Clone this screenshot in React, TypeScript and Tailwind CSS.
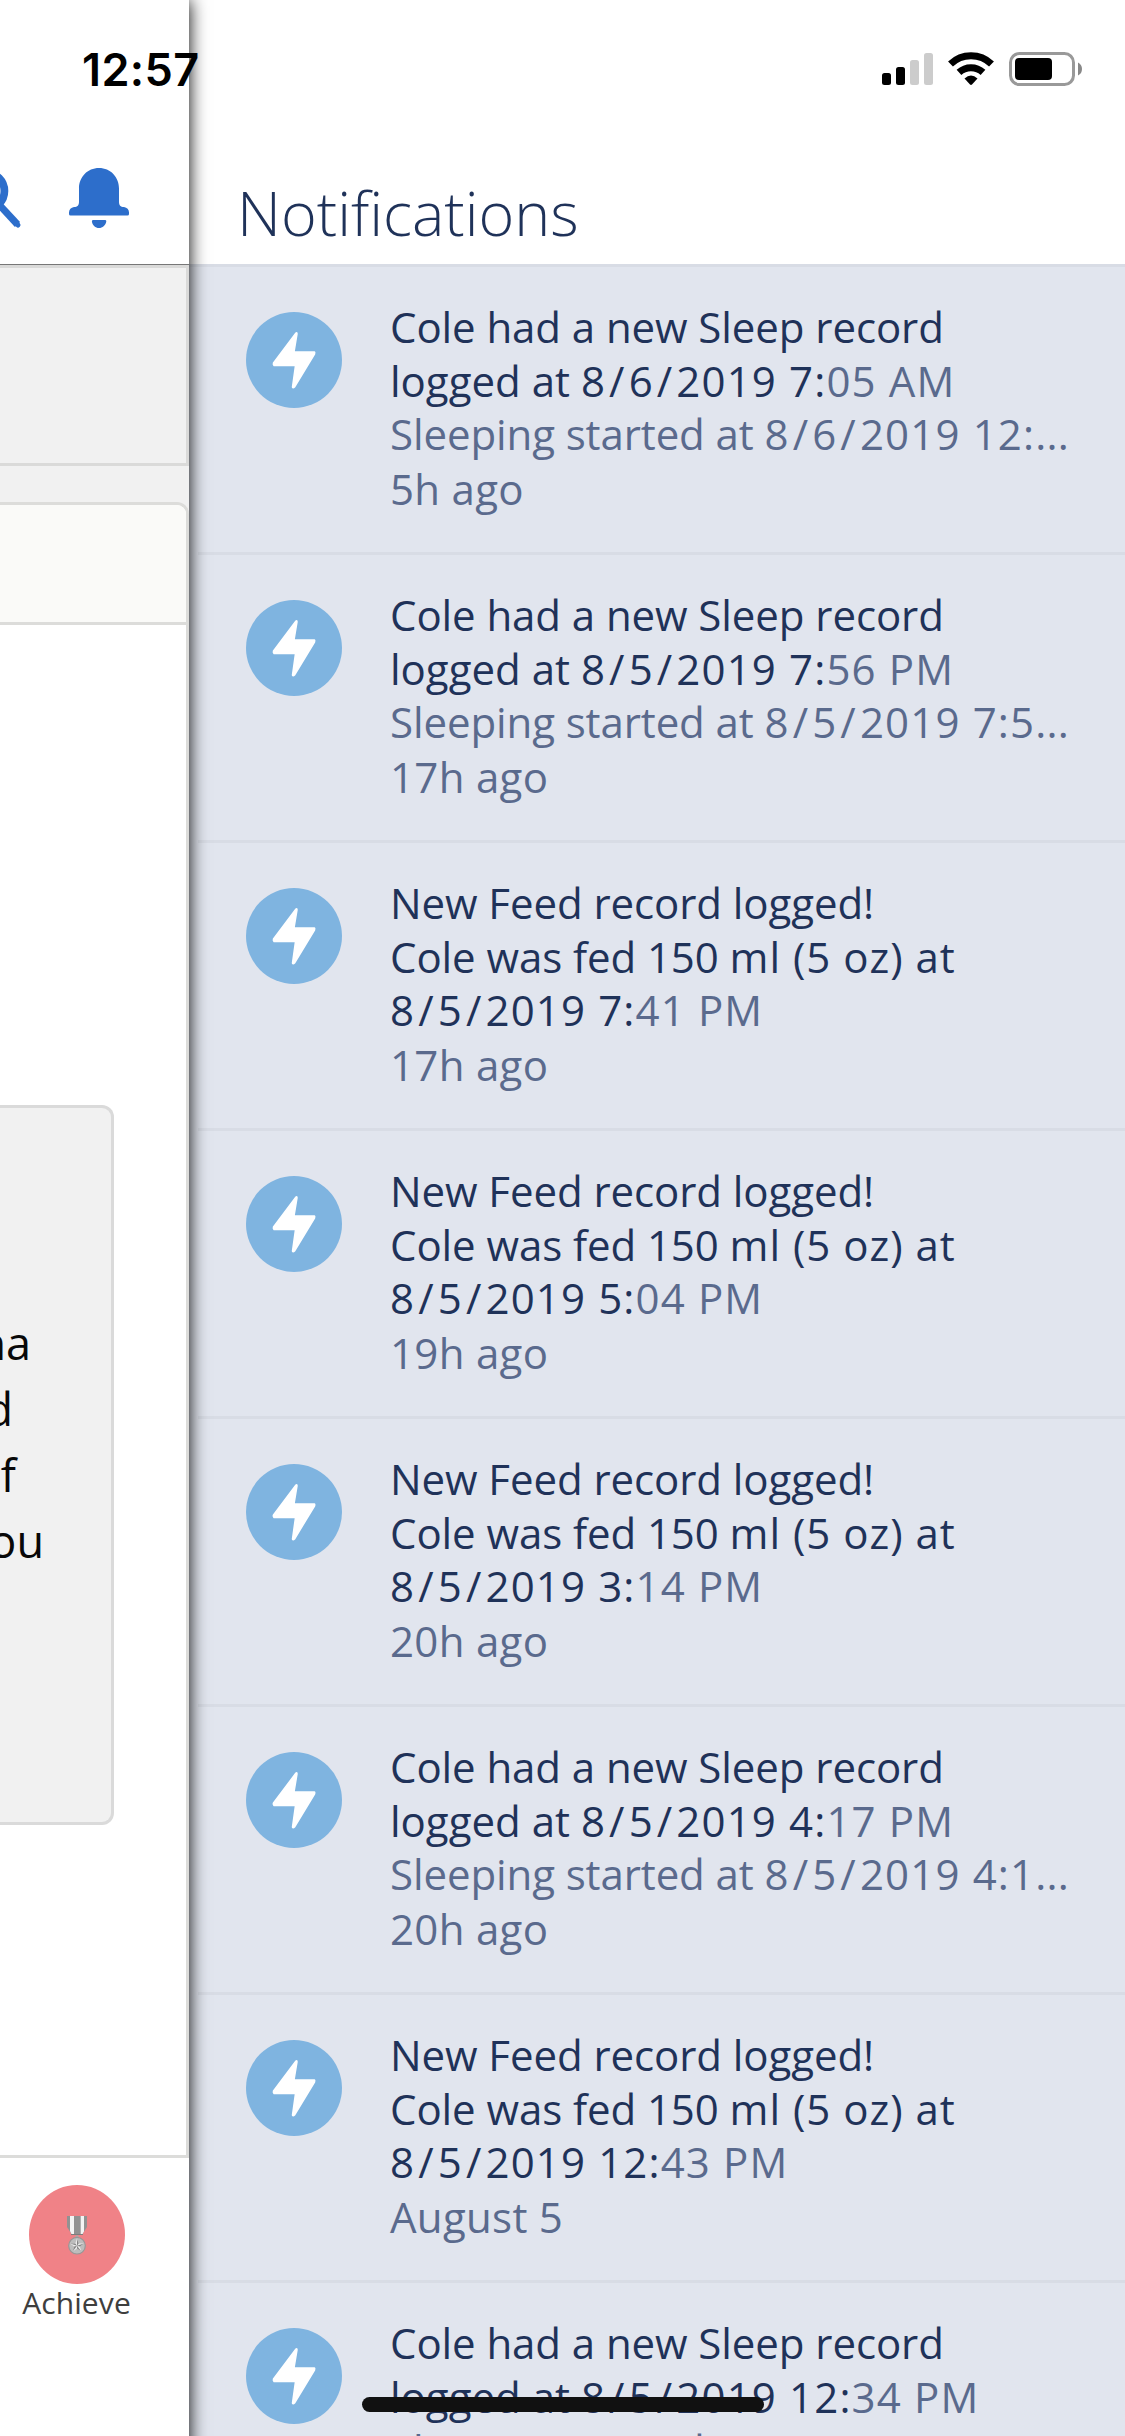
import { Fragment } from "react";

type Item = {
  lead: string;
  second?: string;
  secondMuted?: string;
  third: string;
  thirdMuted?: string;
  kind: "sleep" | "feed";
  when: string;
};

const items: Item[] = [
  { kind: "sleep", lead: "Cole had a new Sleep record", second: "8/6/2019 7:", secondMuted: "05 AM", third: "8/6/2019 12:", when: "5h ago" },
  { kind: "sleep", lead: "Cole had a new Sleep record", second: "8/5/2019 7:", secondMuted: "56 PM", third: "8/5/2019 7:5", when: "17h ago" },
  { kind: "feed", lead: "New Feed record logged!", third: "8/5/2019 7:", thirdMuted: "41 PM", when: "17h ago" },
  { kind: "feed", lead: "New Feed record logged!", third: "8/5/2019 5:", thirdMuted: "04 PM", when: "19h ago" },
  { kind: "feed", lead: "New Feed record logged!", third: "8/5/2019 3:", thirdMuted: "14 PM", when: "20h ago" },
  { kind: "sleep", lead: "Cole had a new Sleep record", second: "8/5/2019 4:", secondMuted: "17 PM", third: "8/5/2019 4:1", when: "20h ago" },
  { kind: "feed", lead: "New Feed record logged!", third: "8/5/2019 12:", thirdMuted: "43 PM", when: "August 5" },
  { kind: "sleep", lead: "Cole had a new Sleep record", second: "8/5/2019 12:", secondMuted: "34 PM", third: "8/5/2019 12:", when: "August 5" },
];

/* A date whose slashes are set a little apart from the digits. */
function DateText({ value }: { value: string }) {
  const parts = value.split("/");
  return (
    <span className="tracking-[1.15px]">
      {parts.map((p, i) => (
        <Fragment key={i}>
          {i > 0 && <span className="px-[3px]">/</span>}
          {p}
        </Fragment>
      ))}
    </span>
  );
}

function Bolt() {
  return (
    <div className="mt-[45px] size-24 shrink-0 rounded-full bg-[#7fb4e0]">
      <svg viewBox="0 0 96 96" className="size-24">
        <path
          d="M50 21 Q51 20 51 22 L48 40 H68.5 Q69 40.500 68.500 42 L48.500 75 Q47 76.500 46.500 75 L49.500 53.500 H28 Q27 52.500 27.500 51 Z"
          fill="#fff"
          stroke="#fff"
          strokeWidth="1.500"
          strokeLinejoin="round"
        />
      </svg>
    </div>
  );
}

function Row({ item, first }: { item: Item; first: boolean }) {
  return (
    <li className="h-[288px] shrink-0">
      <div className={first ? "h-[3px] bg-[#d8dce5]" : "ml-[9px] h-[3px] bg-[#d8dce5]"} />
      <div className="flex gap-12 pl-[57px]">
        <Bolt />
        <div className="pt-[33px] text-[42px] leading-[53.5px] whitespace-nowrap text-[#1f3259]">
          <p className="tracking-[-0.08px]">{item.lead}</p>
          {item.kind === "sleep" ? (
            <>
              <p>
                logged at <DateText value={item.second ?? ""} />
                <span className="tracking-[1.15px] text-[#5a6a8d]">{item.secondMuted}</span>
              </p>
              <p className="tracking-[-0.1px] text-[#5a6a8d]">
                Sleeping started at <DateText value={item.third} />
                <span className="tracking-[0.3px]">...</span>
              </p>
            </>
          ) : (
            <>
              <p>
                <span className="tracking-[-0.08px]">Cole was fed 150 </span>
                <span className="tracking-[1px]">ml (5 oz) at</span>
              </p>
              <p>
                <DateText value={item.third} />
                <span className="tracking-[1.15px] text-[#5a6a8d]">{item.thirdMuted}</span>
              </p>
            </>
          )}
          <p className="pt-px tracking-[0.3px] text-[#5a6a8d]">{item.when}</p>
        </div>
      </div>
    </li>
  );
}

function Medal() {
  return (
    <svg viewBox="0 0 20 40" className="h-10 w-5">
      <path d="M0 0 H20 V11 L15.500 18 H4.500 L0 11 Z" fill="#929292" />
      <path d="M3 0 H7 V18 H4.500 L3 15 Z M13.700 0 H17 V15.500 L15.500 18 H13.700 Z" fill="#f4f4f4" />
      <path d="M4 18.500 H16" stroke="#7d7d7d" />
      <path d="M8.500 19.500 H11.500 V21 H8.500 Z" fill="#aaa" />
      <circle cx="10" cy="29.700" r="8.300" fill="#bdbdbd" stroke="#979797" strokeWidth="1.200" />
      <path d="M10 22.500 L11.700 27.400 H16.900 L12.800 30.600 L14.300 35.600 L10 32.600 L5.700 35.600 L7.200 30.600 L3.100 27.400 H8.300 Z" fill="#ececec" />
      <path d="M10 29.700 V23 L11.700 27.400 Z M10 29.700 L16.900 27.400 L12.800 30.600 Z M10 29.700 L14.300 35.600 L10 32.600 Z M10 29.700 L5.700 35.600 L7.200 30.600 Z M10 29.700 L3.100 27.400 H8.300 Z" fill="#858585" />
    </svg>
  );
}

const clipped: { text: string; pad: string }[] = [
  { text: "na", pad: "pr-[80px]" },
  { text: "d", pad: "pr-[98px]" },
  { text: "f", pad: "pr-[95px]" },
  { text: "ou", pad: "pr-[67px]" },
];

function PageEdge() {
  return (
    <div className="relative z-10 flex h-[2470px] w-[189px] shrink-0 flex-col bg-white shadow-[0_0_17px_#000]">
      <header className="h-[264px] pt-[160px]">
        <svg viewBox="0 160 189 80" className="h-20 w-[189px]">
          <circle cx="-13.900" cy="191" r="18.300" fill="none" stroke="#2d6ecb" strokeWidth="7.800" />
          <path d="M-2 203.500 L17.500 224.500" stroke="#2d6ecb" strokeWidth="7" fill="none" />
          <path d="M15 222 L18 225" stroke="#2d6ecb" strokeWidth="5" strokeLinecap="round" />
          <path
            d="M99 168 C110.500 168 119 177 119 188.500 V202 C119 205 120.500 207 124 207 C127 207.500 129 209.500 129 212.500 V214 Q129 215.500 127.500 215.500 H70.500 Q69 215.500 69 214 V212.500 C69 209.500 71 207.500 74 207 C77.500 207 79 205 79 202 V188.500 C79 177 87.500 168 99 168 Z M93 220 H105.300 Q106.500 220 106.300 221.500 C105.500 225.500 102.500 228 99 228 C95.500 228 92.500 225.500 91.900 221.500 Q91.700 220 93 220 Z"
            fill="#2d6ecb"
          />
        </svg>
      </header>
      <div className="h-px shrink-0 bg-[#777]" />
      <div className="h-[201px] shrink-0 border-y-[3px] border-r-[3px] border-[#dadad9] bg-[#f1f1f1]" />
      <div className="bg-[#f1f1f1] pt-9">
        <div className="h-[1656px] overflow-hidden rounded-tr-xl border-y-[3px] border-r-[3px] border-[#dcdcda] bg-white">
          <div className="h-[120px] border-b-[3px] border-[#dcdcda] bg-[#fafaf8]" />
          <div className="mt-[480px] h-[720px] w-[114px] rounded-r-xl border-y-[3px] border-r-[3px] border-[#dadada] bg-[#f1f1f1] pt-[202px]">
            {clipped.map((l) => (
              <p key={l.text} className={`flex justify-end text-[45px] leading-[66px] text-[#080808] ${l.pad}`}>
                {l.text}
              </p>
            ))}
          </div>
        </div>
      </div>
      <div className="flex flex-1 flex-col items-center bg-white pt-[27px] pr-[35px]">
        <div className="flex h-[99px] w-24 items-center justify-center rounded-[50%] bg-[#f08287] pt-[3px]">
          <Medal />
        </div>
        <p className="pt-px pr-px text-[30px] leading-[36px] tracking-[0.1px] text-[#3e3e3e]">Achieve</p>
      </div>
    </div>
  );
}

function StatusBar() {
  return (
    <div className="absolute inset-x-0 top-0 z-20 flex h-[138px] items-center justify-between pr-[42px] pl-[82px]">
      <span className="pt-px font-['Inter'] text-[45px] font-semibold tracking-[0.4px] text-black">12:57</span>
      <svg viewBox="882 48 201 42" className="h-[42px] w-[201px]">
        <rect x="882" y="73" width="9" height="12" rx="2.500" />
        <rect x="896" y="67" width="9" height="18" rx="2.500" />
        <rect x="910" y="60" width="9" height="25" rx="2.500" fill="#ccc" />
        <rect x="924" y="53" width="9" height="32" rx="2.500" fill="#ccc" />
        <g fill="none" stroke="#000" strokeWidth="7">
          <path d="M950.500 64 A29.500 29.500 0 0 1 991.500 64" />
          <path d="M959 72.300 A17.800 17.800 0 0 1 983 72.300" />
        </g>
        <path d="M964.500 78.500 Q971 72.500 977.500 78.500 L972 84.500 Q971 85.300 970 84.500 Z" />
        <rect x="1010.500" y="53.500" width="63" height="31" rx="9" fill="none" stroke="#999" strokeWidth="3" />
        <rect x="1015" y="58" width="37" height="22" rx="4" />
        <path d="M1078 62.500 Q1082 64.500 1082 69 Q1082 73.500 1078 75.500 Z" fill="#888" />
      </svg>
    </div>
  );
}

export default function App() {
  return (
    <div className="relative flex h-[2436px] w-[1125px] overflow-hidden bg-white font-['Open_Sans',sans-serif]">
      <PageEdge />
      <section className="flex h-[2436px] flex-1 flex-col overflow-hidden">
        <h1 className="h-[264px] shrink-0 pt-[181px] pl-12 text-[61px] leading-[64px] font-light text-[#1f3259]">
          Notifications
        </h1>
        <ul className="flex flex-1 flex-col overflow-hidden bg-[#e1e5ee]">
          {items.map((item, i) => (
            <Row key={i} item={item} first={i === 0} />
          ))}
        </ul>
      </section>
      <StatusBar />
      <div className="absolute top-[2397px] left-[362px] z-20 h-[15px] w-[402px] rounded-full bg-[#111]" />
    </div>
  );
}
